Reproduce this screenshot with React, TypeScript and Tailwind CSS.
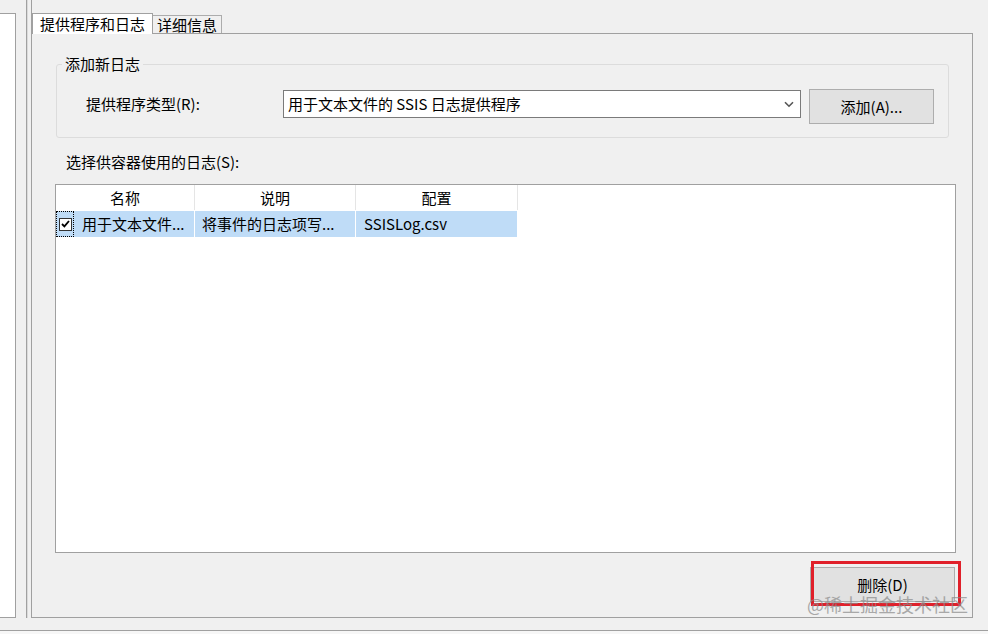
import React from "react";

const font = { fontFamily: '"Noto Sans CJK SC", "Microsoft YaHei", sans-serif' };

function Tabs() {
  return (
    <div className="flex h-[20px] items-end">
      <div className="relative z-10 -mb-px flex h-[21px] w-[121px] items-center border border-b-0 border-[#a0a0a0] bg-white pl-[7px] text-[15px] leading-[20px] text-black">
        提供程序和日志
      </div>
      <div className="flex h-[18px] w-[69px] items-center border border-b-0 border-l-0 border-[#acacac] bg-[#f0f0f0] pl-[4px] text-[15px] leading-[18px] text-black">
        详细信息
      </div>
    </div>
  );
}

function AddLogGroup() {
  return (
    <div className="relative ml-[24px] mt-[30px] h-[74px] w-[893px] rounded-[3px] border border-[#dcdcdc]">
      <span className="absolute -top-[11px] left-[5px] bg-[#f0f0f0] px-[3px] text-[15px] leading-[20px] text-black">
        添加新日志
      </span>
      <div className="flex items-start pl-[29px] pt-[24px]">
        <div className="mt-[5px] w-[197px] text-[15px] leading-[20px] text-black">提供程序类型(R):</div>
        <div className="mt-[1px] flex h-[28px] w-[518px] items-center justify-between border border-[#7a7a7a] bg-white pl-[4px] pr-[6px]">
          <span className="text-[15px] leading-[20px] text-black">用于文本文件的 SSIS 日志提供程序</span>
          <svg width="10" height="7" viewBox="0 0 10 7">
            <path d="M1 1.2 L5 5.2 L9 1.2" fill="none" stroke="#555" strokeWidth="1.6" />
          </svg>
        </div>
        <button className="ml-[8px] flex h-[35px] w-[125px] items-center justify-center border border-[#adadad] bg-[#e1e1e1] text-[15px] leading-[20px] text-black">
          添加(A)...
        </button>
      </div>
    </div>
  );
}

function LogList() {
  return (
    <div className="ml-[23px] mt-[12px] h-[369px] w-[901px] border border-[#a0a0a0] bg-white">
      <div className="flex h-[25px] text-[15px] leading-[20px] text-black">
        <div className="flex w-[139px] items-center justify-center border-r border-[#e5e5e5]">名称</div>
        <div className="flex w-[161px] items-center justify-center border-r border-[#e5e5e5]">说明</div>
        <div className="flex w-[162px] items-center justify-center border-r border-[#e5e5e5]">配置</div>
      </div>
      <div className="mt-px flex h-[26px] text-[15px] leading-[20px] text-black">
        <div className="flex w-[139px] items-center border-r border-white bg-[#bfdcf7]">
          <div className="flex h-[26px] w-[18px] items-center justify-center border border-dotted border-black">
            <div className="flex h-[13px] w-[13px] items-center justify-center border border-[#333] bg-white">
              <svg width="9" height="8" viewBox="0 0 9 8">
                <path d="M1 4 L3.4 6.4 L8 1" fill="none" stroke="#000" strokeWidth="1.8" />
              </svg>
            </div>
          </div>
          <span className="ml-[8px]">用于文本文件...</span>
        </div>
        <div className="flex w-[161px] items-center border-r border-white bg-[#bfdcf7] pl-[7px]">将事件的日志项写...</div>
        <div className="flex w-[161px] items-center bg-[#bfdcf7] pl-[8px]">SSISLog.csv</div>
      </div>
    </div>
  );
}

export default function App() {
  return (
    <div className="relative flex h-[634px] w-[988px] flex-col overflow-hidden bg-[#f0f0f0]" style={font}>
      <div className="flex h-[630px]">
        <div className="mt-[13px] h-[605px] w-[16px] border-y border-r border-[#a0a0a0] bg-white" />
        <div className="ml-[10px] h-[618px] w-px bg-[#a0a0a0]" />
        <div className="h-[618px] w-px bg-[#dadada]" />
        <div className="flex h-[618px] w-[942px] flex-col border-l border-[#a0a0a0] pl-0 pt-[13px] ml-[3px]">
          <Tabs />
          <div className="flex h-[585px] flex-col border-y border-r border-[#a0a0a0] bg-[#f0f0f0]">
            <AddLogGroup />
            <div className="ml-[34px] mt-[14px] text-[15px] leading-[20px] text-black">选择供容器使用的日志(S):</div>
            <LogList />
            <button className="ml-[778px] mt-[14px] flex h-[35px] w-[145px] items-center justify-center border border-[#adadad] bg-[#e1e1e1] text-[15px] leading-[20px] text-black">
              删除(D)
            </button>
          </div>
        </div>
      </div>
      <div className="h-[4px] border-t border-[#a0a0a0] bg-[#f7f7f7]" />

      <div className="pointer-events-none absolute left-[811px] top-[561px] h-[45px] w-[150px] border-[3px] border-[#e0202a]" />
      <div className="pointer-events-none absolute left-[807px] top-[592px] text-[18px] leading-[24px] text-[#8a8a8a] opacity-70">
        @稀土掘金技术社区
      </div>
    </div>
  );
}
